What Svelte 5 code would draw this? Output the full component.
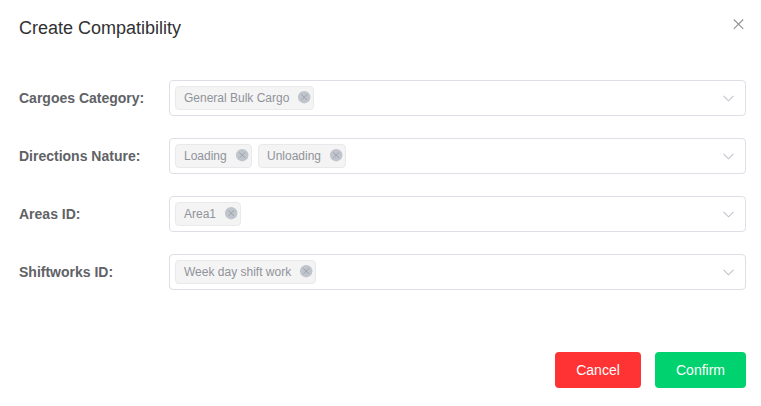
<script>
  const fields = [
    { label: 'Cargoes Category:', tags: [{ text: 'General Bulk Cargo', width: 139 }] },
    { label: 'Directions Nature:', tags: [{ text: 'Loading', width: 77 }, { text: 'Unloading', width: 88 }] },
    { label: 'Areas ID:', tags: [{ text: 'Area1', width: 66 }] },
    { label: 'Shiftworks ID:', tags: [{ text: 'Week day shift work', width: 141 }] }
  ];
</script>

<div class="dialog">
  <header>
    <h1>Create Compatibility</h1>
    <button class="close" aria-label="Close">
      <svg width="11" height="11" viewBox="0 0 11 11"><path d="M.8.5l9.4 9.4M10.2.5L.8 9.9" /></svg>
    </button>
  </header>

  <form>
    {#each fields as field}
      <div class="row">
        <span class="label">{field.label}</span>
        <div class="select">
          <div class="tags">
            {#each field.tags as tag}
              <span class="tag" style="width: {tag.width}px">
                <span class="text">{tag.text}</span>
                <svg class="remove" width="13" height="13" viewBox="0.3 0.3 13 13">
                  <circle cx="6.5" cy="6.5" r="6.2" />
                  <path d="M3.6 3.6l5.8 5.8M9.4 3.6L3.6 9.4" />
                </svg>
              </span>
            {/each}
          </div>
          <svg class="arrow" width="11" height="7" viewBox="0 0 11 7"><path d="M.5.8L5.5 5.8L10.5.8" /></svg>
        </div>
      </div>
    {/each}
  </form>

  <footer>
    <button class="btn cancel">Cancel</button>
    <button class="btn confirm">Confirm</button>
  </footer>
</div>

<style>
  :global(body) {
    background: #fff;
  }
  .dialog {
    box-sizing: border-box;
    width: 761px;
    height: 406px;
    padding: 16px 15px 18px 19px;
    display: flex;
    flex-direction: column;
    font-family: 'Liberation Sans', Arial, sans-serif;
  }
  header {
    height: 64px;
    display: flex;
    justify-content: space-between;
    align-items: flex-start;
  }
  h1 {
    margin: 0;
    font-size: 18px;
    line-height: 24px;
    font-weight: 400;
    color: #303133;
  }
  button {
    border: 0;
    padding: 0;
    font-family: inherit;
  }
  .close {
    background: none;
    margin: 3px 2px 0 0;
    display: flex;
  }
  svg {
    display: block;
    fill: none;
  }
  .close path {
    stroke: #909399;
    stroke-width: 1.1;
  }
  form {
    display: flex;
    flex-direction: column;
    gap: 22px;
  }
  .row {
    display: flex;
    align-items: center;
    height: 36px;
  }
  .label {
    width: 150px;
    font-size: 14px;
    line-height: 36px;
    font-weight: 700;
    color: #606266;
    white-space: nowrap;
  }
  .select {
    box-sizing: border-box;
    flex: 1;
    height: 36px;
    border: 1px solid #dcdfe6;
    border-radius: 4px;
    padding: 0 11px 0 5px;
    display: flex;
    align-items: center;
    justify-content: space-between;
  }
  .tags {
    display: flex;
    gap: 6px;
  }
  .tag {
    box-sizing: border-box;
    height: 24px;
    border: 1px solid #e9e9eb;
    border-radius: 4px;
    background: #f4f4f5;
    padding: 0 2px 0 8px;
    display: flex;
    justify-content: space-between;
    font-size: 12px;
    line-height: 22px;
    color: #909399;
    white-space: nowrap;
  }
  .remove {
    margin-top: 4px;
  }
  .remove circle {
    fill: #c0c4cc;
  }
  .remove path {
    stroke: #909399;
    stroke-width: 0.7;
  }
  .arrow path {
    stroke: #c0c4cc;
    stroke-width: 1.1;
  }
  footer {
    margin-top: auto;
    display: flex;
    justify-content: flex-end;
    gap: 14px;
  }
  .btn {
    height: 36px;
    border-radius: 4px;
    font-size: 14px;
    line-height: 36px;
    color: #fff;
  }
  .cancel {
    width: 86px;
    background: #ff3334;
  }
  .confirm {
    width: 91px;
    background: #00d26f;
  }
</style>
